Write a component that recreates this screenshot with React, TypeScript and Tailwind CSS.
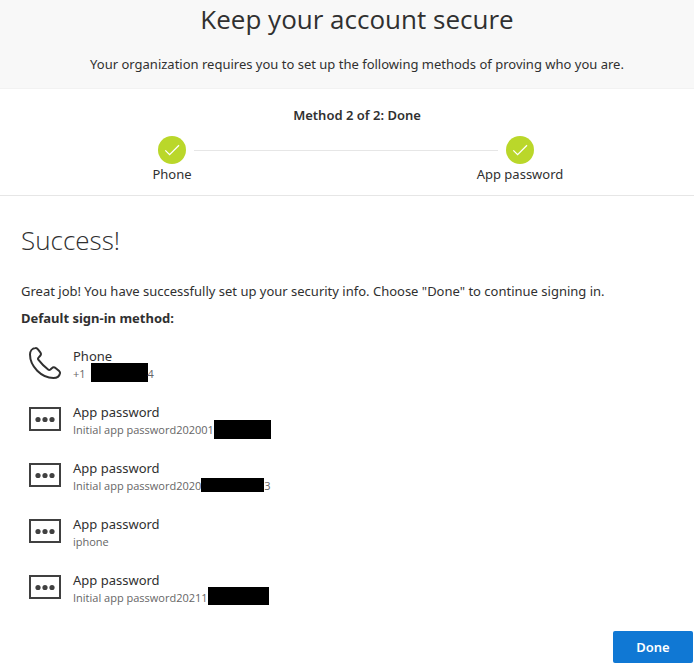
import type { ReactNode } from "react"

type Method = {
  kind: "phone" | "password"
  title: string
  detail: ReactNode
}

const steps = ["Phone", "App password"]

const methods: Method[] = [
  {
    kind: "phone",
    title: "Phone",
    detail: (
      <>
        <span>+1</span>
        <span className="mb-1 ml-[5px] h-[19px] w-[57px] bg-black" />
        <span>4</span>
      </>
    ),
  },
  {
    kind: "password",
    title: "App password",
    detail: (
      <>
        <span>Initial app password202001</span>
        <span className="mb-0.5 h-[19px] w-[57px] bg-black" />
      </>
    ),
  },
  {
    kind: "password",
    title: "App password",
    detail: (
      <>
        <span>Initial app password2020</span>
        <span className="mb-0.5 h-[14px] w-[63px] bg-black" />
        <span>3</span>
      </>
    ),
  },
  { kind: "password", title: "App password", detail: <span>iphone</span> },
  {
    kind: "password",
    title: "App password",
    detail: (
      <>
        <span>Initial app password20211</span>
        <span className="mb-1 h-[18px] w-[61px] bg-black" />
      </>
    ),
  },
]

function CheckCircle() {
  return (
    <svg className="size-7 shrink-0" viewBox="0 0 28 28" fill="none" aria-hidden="true">
      <circle cx="14" cy="14" r="14" fill="#bad72a" />
      <path d="M7.3 14.4 11.6 18.6 21 9.2" stroke="#fff" strokeWidth="1.3" />
    </svg>
  )
}

function PhoneIcon() {
  return (
    <svg className="size-8" viewBox="0 0 32 32" fill="none" aria-hidden="true">
      <path
        d="M6.4 1 C3.2 1.2 1 4.2 1 7.6 C1 19.5 12.5 31 24.4 31 C27.6 31 30.4 29.2 31 26.2 C31.1 25.4 30.8 24.7 30.2 24.1 L26.8 21.2 C25.4 20 24 20 22.8 21.2 L21.4 22.5 C20.7 23.1 19.8 23.1 19.1 22.5 C15.6 19.8 12.2 16.4 9.5 12.9 C8.9 12.2 8.9 11.3 9.5 10.6 L11.2 8.8 C12.1 7.8 12.1 6.4 11.3 5.3 L8.8 2.2 C8.2 1.4 7.4 .9 6.4 1 Z"
        stroke="#303030"
        strokeWidth="2"
        strokeLinejoin="round"
      />
    </svg>
  )
}

function PasswordIcon() {
  return (
    <svg className="h-6 w-8" viewBox="0 0 32 24" fill="none" aria-hidden="true">
      <rect x="1" y="1" width="30" height="22" stroke="#404040" strokeWidth="2" />
      <circle cx="9" cy="12.5" r="2.6" fill="#404040" />
      <circle cx="16" cy="12.5" r="2.6" fill="#404040" />
      <circle cx="23" cy="12.5" r="2.6" fill="#404040" />
    </svg>
  )
}

export default function App() {
  return (
    <main className="bg-white font-['Noto_Sans','Open_Sans',sans-serif] text-[13px] leading-5 text-[#303030]">
      {/* Header */}
      <header className="border-b border-[#f2f2f2] bg-[#f8f8f8] pb-3.5 pl-5 text-center">
        <h1 className="font-['Open_Sans',sans-serif] text-[26px] leading-[38px]">Keep your account secure</h1>
        <p className="mt-4">
          Your organization requires you to set up the following methods of proving who you are.
        </p>
      </header>

      {/* Progress */}
      <section className="border-b border-[#e6e6e6] pt-4 pb-[11px]">
        <h2 className="pl-5 text-center font-semibold">Method 2 of 2: Done</h2>
        <ol className="mt-[11px] -ml-0.5 flex">
          {steps.map((step, i) => (
            <li key={step} className="flex-1">
              <div className="flex items-center">
                <span className={i > 0 ? "mr-2 h-px flex-1 bg-[#e6e6e6]" : "mr-2 h-px flex-1"} />
                <CheckCircle />
                <span className={i < steps.length - 1 ? "ml-2 h-px flex-1 bg-[#e6e6e6]" : "ml-2 h-px flex-1"} />
              </div>
              <p className="text-center">{step}</p>
            </li>
          ))}
        </ol>
      </section>

      {/* Summary */}
      <section className="pt-6 pl-[21px]">
        <h2 className="font-['Open_Sans',sans-serif] text-[26px] leading-10 font-light">Success!</h2>
        <p className="mt-[21px]">
          Great job! You have successfully set up your security info. Choose "Done" to continue signing in.
        </p>
        <p className="mt-[7px] font-bold">Default sign-in method:</p>

        <ul className="mt-4">
          {methods.map((method, i) => (
            <li key={i} className="flex h-14 gap-3">
              <span className="flex h-9 w-10 items-center justify-end pt-0.5">
                {method.kind === "phone" ? <PhoneIcon /> : <PasswordIcon />}
              </span>
              <div className="pt-0.5">
                <p>{method.title}</p>
                <div className="flex h-4 items-center font-['Open_Sans',sans-serif] text-[11px] leading-4 text-[#666]">
                  {method.detail}
                </div>
              </div>
            </li>
          ))}
        </ul>
      </section>

      <div className="mt-[7px] flex justify-end pr-px">
        <button type="button" className="h-8 w-20 rounded-xs bg-[#1078d4] font-semibold text-white">
          Done
        </button>
      </div>
    </main>
  )
}
